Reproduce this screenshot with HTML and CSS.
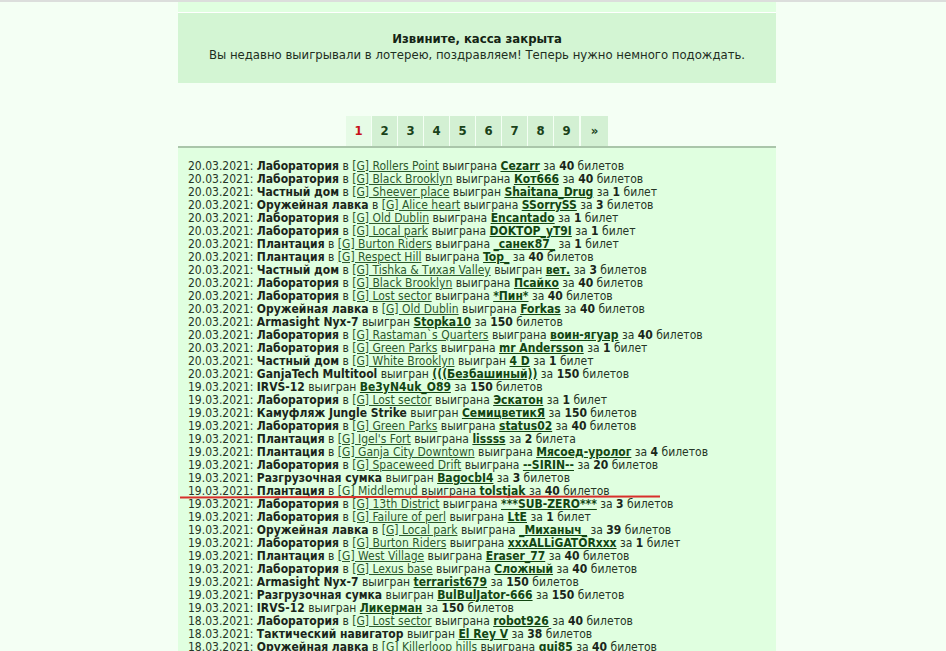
FILE: index.html
```html
<!DOCTYPE html>
<html lang="ru">
<head>
  <meta charset="UTF-8">
  <title>Лотерея</title>
  <link rel="stylesheet" href="styles.css">
</head>
<body>
  <div class="page">
    <div class="strip"></div>
    <div class="notice">
      <b>Извините, касса закрыта</b><br>
      Вы недавно выигрывали в лотерею, поздравляем! Теперь нужно немного подождать.
    </div>

    <div class="pages">
      <span class="current">1</span>
      <a href="#">2</a>
      <a href="#">3</a>
      <a href="#">4</a>
      <a href="#">5</a>
      <a href="#">6</a>
      <a href="#">7</a>
      <a href="#">8</a>
      <a href="#">9</a>
      <a href="#" class="next">»</a>
    </div>

    <div class="log">
      <div class="mark"></div>
      <div>20.03.2021: <b>Лаборатория</b> в <a href="#">[G] Rollers Point</a> выиграна <a class="user" href="#">Cezarr</a> за <b>40</b> билетов</div>
      <div>20.03.2021: <b>Лаборатория</b> в <a href="#">[G] Black Brooklyn</a> выиграна <a class="user" href="#">Кот666</a> за <b>40</b> билетов</div>
      <div>20.03.2021: <b>Частный дом</b> в <a href="#">[G] Sheever place</a> выигран <a class="user" href="#">Shaitana_Drug</a> за <b>1</b> билет</div>
      <div>20.03.2021: <b>Оружейная лавка</b> в <a href="#">[G] Alice heart</a> выиграна <a class="user" href="#">SSorrySS</a> за <b>3</b> билетов</div>
      <div>20.03.2021: <b>Лаборатория</b> в <a href="#">[G] Old Dublin</a> выиграна <a class="user" href="#">Encantado</a> за <b>1</b> билет</div>
      <div>20.03.2021: <b>Лаборатория</b> в <a href="#">[G] Local park</a> выиграна <a class="user" href="#">DOKTOP_yT9I</a> за <b>1</b> билет</div>
      <div>20.03.2021: <b>Плантация</b> в <a href="#">[G] Burton Riders</a> выиграна <a class="user" href="#">_санек87_</a> за <b>1</b> билет</div>
      <div>20.03.2021: <b>Плантация</b> в <a href="#">[G] Respect Hill</a> выиграна <a class="user" href="#">Top_</a> за <b>40</b> билетов</div>
      <div>20.03.2021: <b>Частный дом</b> в <a href="#">[G] Tishka &amp; Тихая Valley</a> выигран <a class="user" href="#">вет.</a> за <b>3</b> билетов</div>
      <div>20.03.2021: <b>Лаборатория</b> в <a href="#">[G] Black Brooklyn</a> выиграна <a class="user" href="#">Псайко</a> за <b>40</b> билетов</div>
      <div>20.03.2021: <b>Лаборатория</b> в <a href="#">[G] Lost sector</a> выиграна <a class="user" href="#">*Пин*</a> за <b>40</b> билетов</div>
      <div>20.03.2021: <b>Оружейная лавка</b> в <a href="#">[G] Old Dublin</a> выиграна <a class="user" href="#">Forkas</a> за <b>40</b> билетов</div>
      <div>20.03.2021: <b>Armasight Nyx-7</b> выигран <a class="user" href="#">Stopka10</a> за <b>150</b> билетов</div>
      <div>20.03.2021: <b>Лаборатория</b> в <a href="#">[G] Rastaman`s Quarters</a> выиграна <a class="user" href="#">воин-ягуар</a> за <b>40</b> билетов</div>
      <div>20.03.2021: <b>Лаборатория</b> в <a href="#">[G] Green Parks</a> выиграна <a class="user" href="#">mr Andersson</a> за <b>1</b> билет</div>
      <div>20.03.2021: <b>Частный дом</b> в <a href="#">[G] White Brooklyn</a> выигран <a class="user" href="#">4 D</a> за <b>1</b> билет</div>
      <div>20.03.2021: <b>GanjaTech Multitool</b> выигран <a class="user" href="#">(((Безбашиный))</a> за <b>150</b> билетов</div>
      <div>19.03.2021: <b>IRVS-12</b> выигран <a class="user" href="#">Be3yN4uk_O89</a> за <b>150</b> билетов</div>
      <div>19.03.2021: <b>Лаборатория</b> в <a href="#">[G] Lost sector</a> выиграна <a class="user" href="#">Эскатон</a> за <b>1</b> билет</div>
      <div>19.03.2021: <b>Камуфляж Jungle Strike</b> выигран <a class="user" href="#">СемицветикЯ</a> за <b>150</b> билетов</div>
      <div>19.03.2021: <b>Лаборатория</b> в <a href="#">[G] Green Parks</a> выиграна <a class="user" href="#">status02</a> за <b>40</b> билетов</div>
      <div>19.03.2021: <b>Плантация</b> в <a href="#">[G] Igel's Fort</a> выиграна <a class="user" href="#">lissss</a> за <b>2</b> билета</div>
      <div>19.03.2021: <b>Плантация</b> в <a href="#">[G] Ganja City Downtown</a> выиграна <a class="user" href="#">Мясоед-уролог</a> за <b>4</b> билетов</div>
      <div>19.03.2021: <b>Лаборатория</b> в <a href="#">[G] Spaceweed Drift</a> выиграна <a class="user" href="#">--SIRIN--</a> за <b>20</b> билетов</div>
      <div>19.03.2021: <b>Разгрузочная сумка</b> выигран <a class="user" href="#">BagocbI4</a> за <b>3</b> билетов</div>
      <div>19.03.2021: <b>Плантация</b> в <a href="#">[G] Middlemud</a> выиграна <a class="user" href="#">tolstjak</a> за <b>40</b> билетов</div>
      <div>19.03.2021: <b>Лаборатория</b> в <a href="#">[G] 13th District</a> выиграна <a class="user" href="#">***SUB-ZERO***</a> за <b>3</b> билетов</div>
      <div>19.03.2021: <b>Лаборатория</b> в <a href="#">[G] Failure of perl</a> выиграна <a class="user" href="#">LtE</a> за <b>1</b> билет</div>
      <div>19.03.2021: <b>Оружейная лавка</b> в <a href="#">[G] Local park</a> выиграна <a class="user" href="#">_Миханыч_</a> за <b>39</b> билетов</div>
      <div>19.03.2021: <b>Лаборатория</b> в <a href="#">[G] Burton Riders</a> выиграна <a class="user" href="#">xxxALLiGATORxxx</a> за <b>1</b> билет</div>
      <div>19.03.2021: <b>Плантация</b> в <a href="#">[G] West Village</a> выиграна <a class="user" href="#">Eraser_77</a> за <b>40</b> билетов</div>
      <div>19.03.2021: <b>Лаборатория</b> в <a href="#">[G] Lexus base</a> выиграна <a class="user" href="#">Сложный</a> за <b>40</b> билетов</div>
      <div>19.03.2021: <b>Armasight Nyx-7</b> выигран <a class="user" href="#">terrarist679</a> за <b>150</b> билетов</div>
      <div>19.03.2021: <b>Разгрузочная сумка</b> выигран <a class="user" href="#">BulBulJator-666</a> за <b>150</b> билетов</div>
      <div>19.03.2021: <b>IRVS-12</b> выигран <a class="user" href="#">Ликерман</a> за <b>150</b> билетов</div>
      <div>18.03.2021: <b>Лаборатория</b> в <a href="#">[G] Lost sector</a> выиграна <a class="user" href="#">robot926</a> за <b>40</b> билетов</div>
      <div>18.03.2021: <b>Тактический навигатор</b> выигран <a class="user" href="#">El Rey V</a> за <b>38</b> билетов</div>
      <div>18.03.2021: <b>Оружейная лавка</b> в <a href="#">[G] Killerloop hills</a> выиграна <a class="user" href="#">gui85</a> за <b>40</b> билетов</div>
      <div>18.03.2021: <b>Лаборатория</b> в <a href="#">[G] Old Dublin</a> выиграна <a class="user" href="#">Encantado</a> за <b>40</b> билетов</div>
      <div>18.03.2021: <b>Плантация</b> в <a href="#">[G] Green Parks</a> выиграна <a class="user" href="#">status02</a> за <b>40</b> билетов</div>
    </div>
  </div>
</body>
</html>
```

FILE: styles.css
```css
/* lottery page */
body {
  margin: 0;
  padding: 0 0 0 8px;
  border-top: 2px solid #dcdedc;
  background: #f4fff4;
  font-family: "DejaVu Sans Condensed", "Noto Sans", sans-serif;
  font-size: 12px;
  color: #263626;
}

.page {
  width: 598px;
  margin: 0 auto;
}

.strip {
  height: 10px;
  background: #e0ffe0;
  border-bottom: 1px solid #ffffff;
}

.notice {
  height: 70px;
  box-sizing: border-box;
  padding-top: 18px;
  background: #d3f5d3;
  text-align: center;
  font-size: 13px;
  line-height: 16px;
  color: #1e2e1e;
}

.notice b {
  color: #142414;
}

.pages {
  display: flex;
  justify-content: center;
  gap: 1px;
  margin-top: 33px;
}

.pages a,
.pages span {
  width: 25px;
  height: 30px;
  line-height: 30px;
  text-align: center;
  font-weight: bold;
  font-size: 13px;
  text-decoration: none;
  background: #d3f0d3;
  color: #1a421a;
}

.pages .current {
  background: #e6fbe6;
  color: #c8101a;
}

.pages .next {
  width: 27px;
  margin-left: 1px;
}

.log {
  position: relative;
  border-top: 2px solid #aac6aa;
  background: #e0ffe0;
  padding: 12px 0 20px 10px;
  line-height: 13px;
  white-space: nowrap;
}

.log b {
  color: #1a261a;
}

.log a {
  color: #2c5a2c;
  text-decoration: underline;
}

.log a.user {
  font-weight: bold;
  color: #124612;
}

/* red marker drawn under one of the rows */
.mark {
  position: absolute;
  left: 2px;
  top: 348px;
  width: 480px;
  height: 2px;
  background: #d8302c;
  transform: rotate(-0.1deg);
}
```
